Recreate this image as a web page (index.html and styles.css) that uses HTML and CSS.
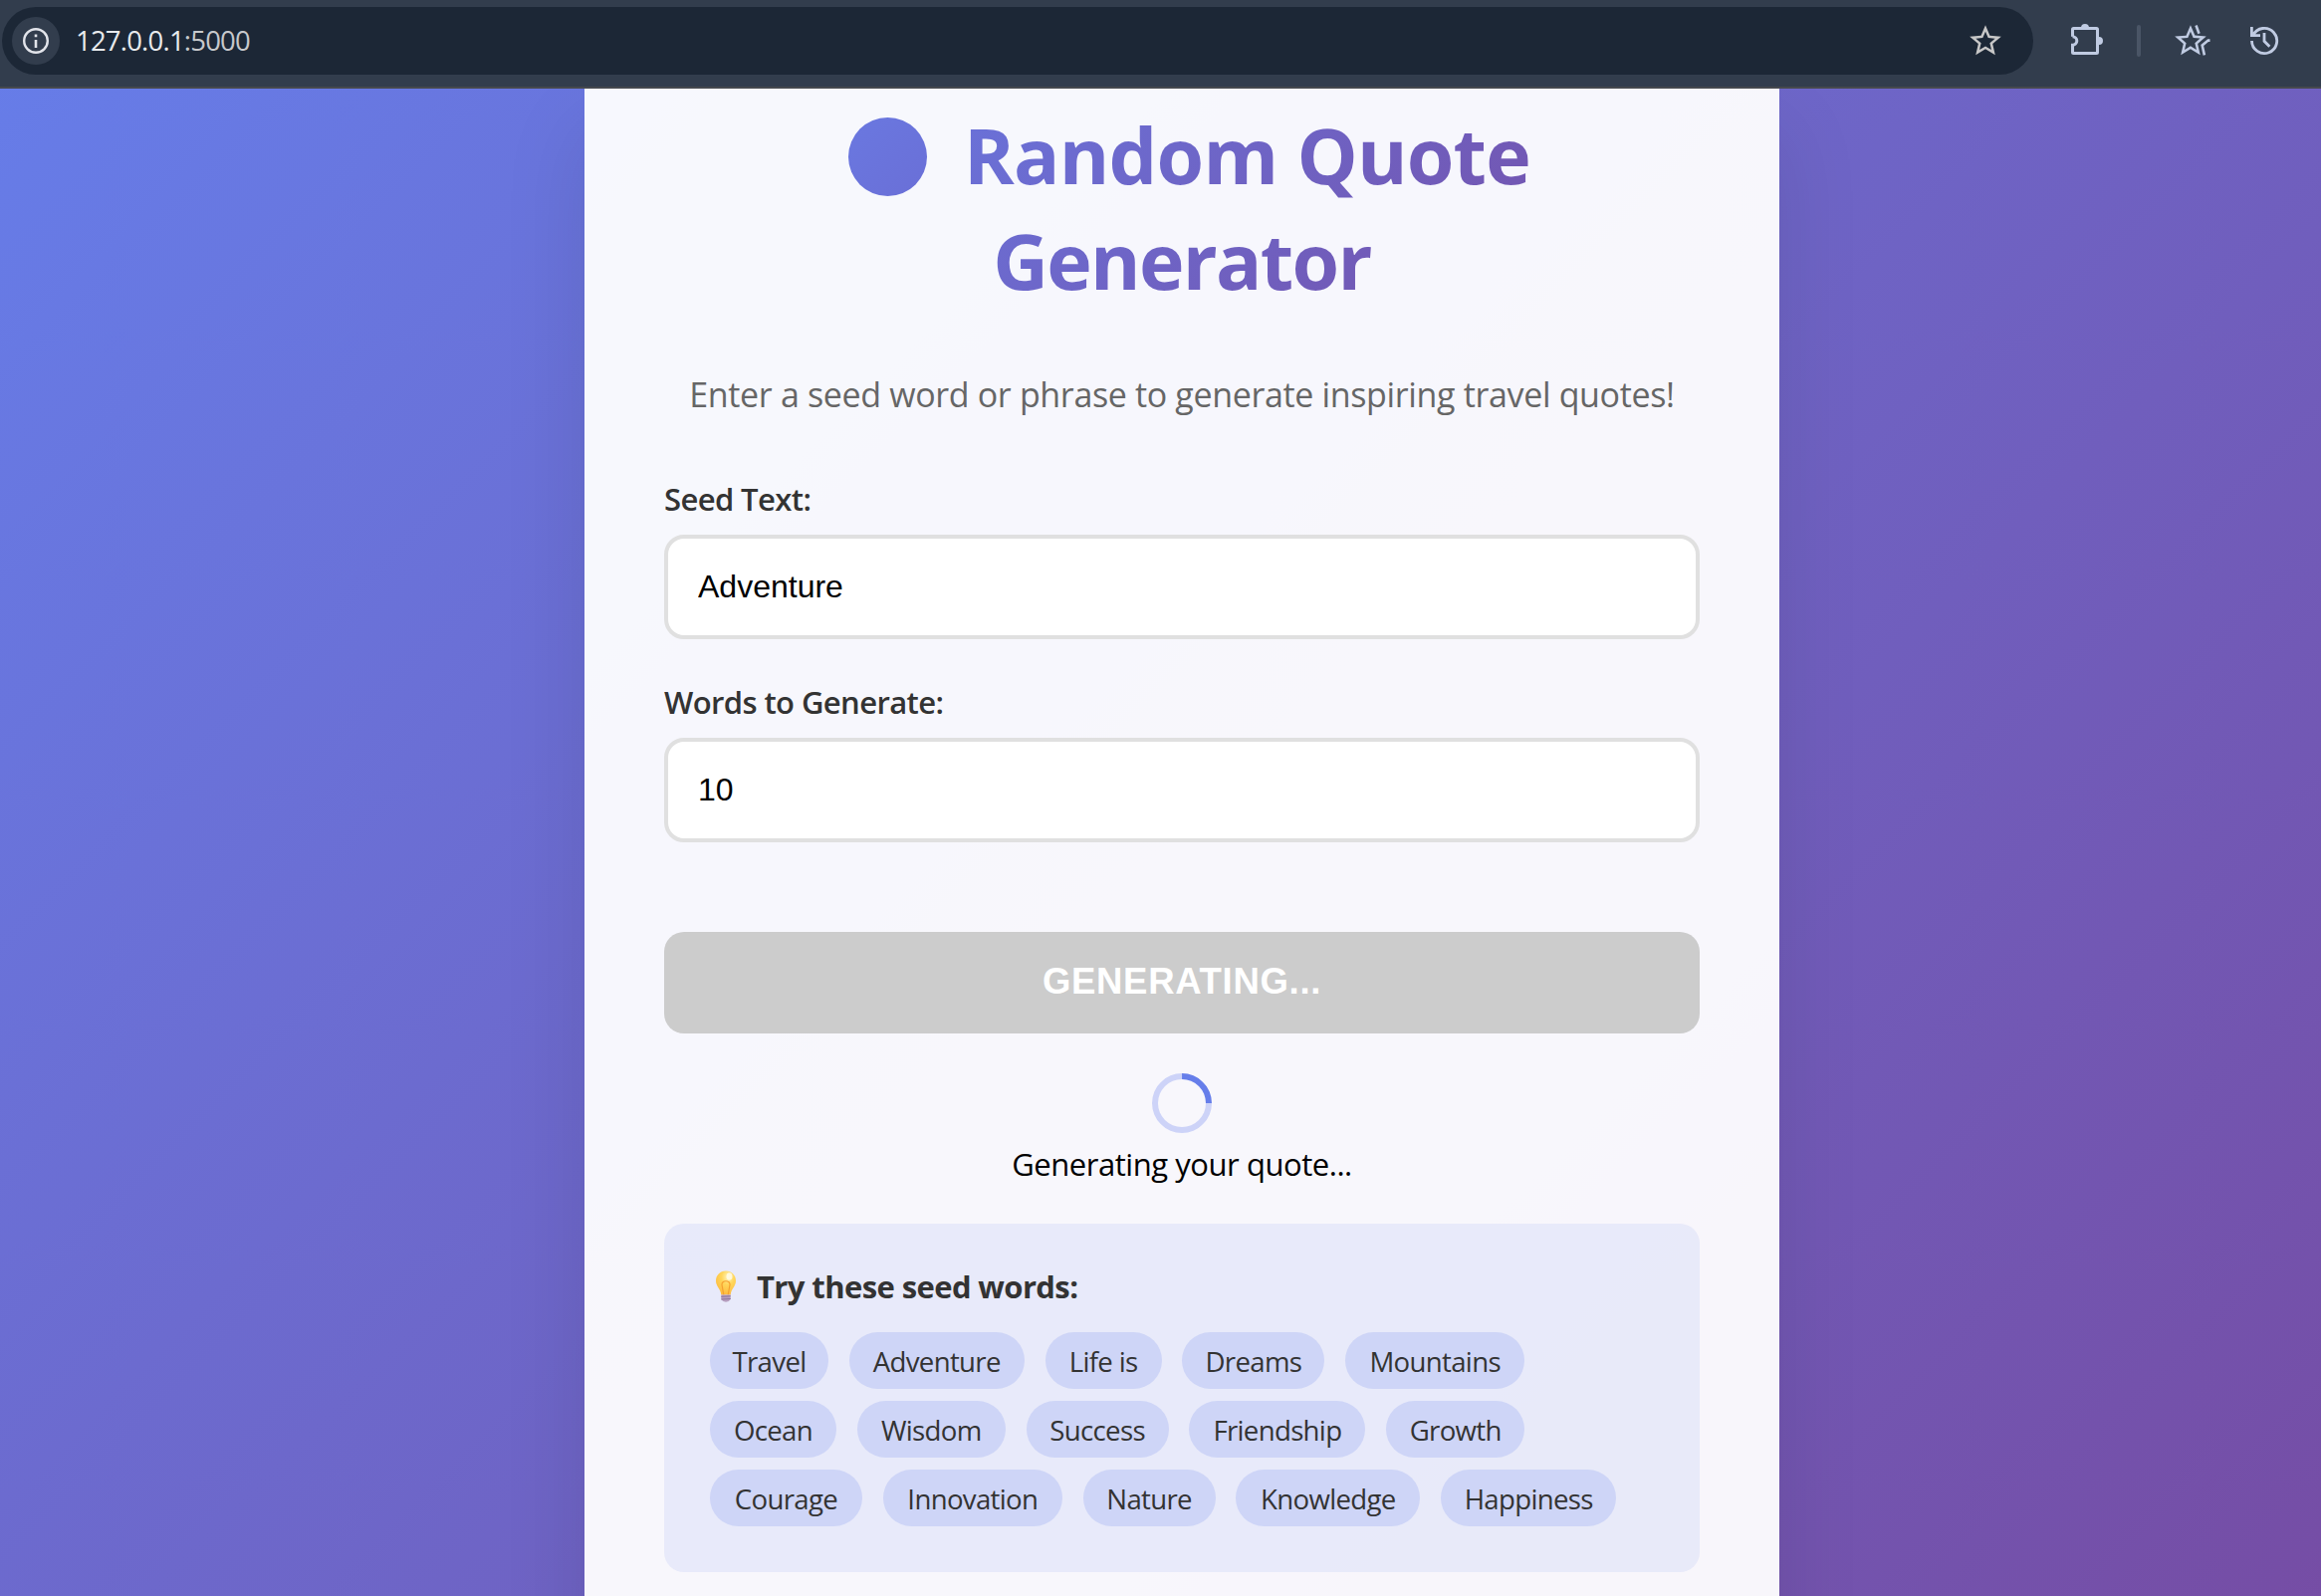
FILE: index.html
```
<!DOCTYPE html>
<html lang="en">
<head>
<meta charset="utf-8">
<title>Random Quote Generator</title>
<link rel="stylesheet" href="styles.css">
</head>
<body>
<header class="toolbar">
  <div class="omnibox">
    <span class="site-info">
      <svg width="26" height="26" viewBox="0 0 26 26" fill="none" stroke="currentColor"><circle cx="13" cy="13" r="11.8" stroke-width="2.4"/><path d="M13 12v8M13 6.6v2.6" stroke-width="2.6"/></svg>
    </span>
    <span class="url">127.0.0.1<span class="port">:5000</span></span>
    <svg class="bookmark" width="38" height="38" viewBox="0 0 24 24" fill="currentColor"><path d="M22 9.24l-7.19-.62L12 2 9.19 8.63 2 9.24l5.46 4.73L5.82 21 12 17.27 18.18 21l-1.63-7.03L22 9.24zM12 15.4l-3.76 2.27 1-4.28-3.32-2.88 4.38-.38L12 6.1l1.71 4.04 4.38.38-3.32 2.88 1 4.28L12 15.4z"/></svg>
  </div>
  <div class="actions">
    <svg width="48" height="48" viewBox="0 0 48 48" fill="none" stroke="currentColor" stroke-width="3"><path d="M7.5 19.7V12.5q0-1 1-1h23q1 0 1 1v23q0 1-1 1h-23q-1 0-1-1v-7.2A4.3 4.3 0 0 0 7.5 19.7"/><path d="M16 11a4 4 0 0 1 8 0zM34 20a4 4 0 0 1 0 8z" fill="currentColor" stroke="none"/></svg>
    <span class="divider"></span>
    <svg width="48" height="48" viewBox="0 0 48 48" fill="none" stroke="currentColor" stroke-width="2.6"><path d="M22 9.24l-7.19-.62L12 2 9.19 8.63 2 9.24l5.46 4.73L5.82 21 12 17.27 18.18 21l-1.63-7.03L22 9.24zM12 15.4l-3.76 2.27 1-4.28-3.32-2.88 4.38-.38L12 6.1l1.71 4.04 4.38.38-3.32 2.88 1 4.28L12 15.4z" transform="translate(5 5) scale(1.58)" fill="currentColor" stroke="none"/><path d="M29.5 8.5l3 8.3M43.5 23.6h-1.8l-6 5 2.2 9.8"/></svg>
    <svg width="48" height="48" viewBox="0 0 48 48" fill="none" stroke="currentColor" stroke-width="2.8"><path d="M11.5 24A12.6 12.6 0 1 0 12.8 18.4M11.4 10v8.6H20M24 16v8.3l5.4 5.4"/></svg>
  </div>
</header>
<main class="page">
  <section class="card">
    <h1 class="title">
      <span class="title-line first"><i class="dot"></i><span>Random Quote</span></span>
      <span class="title-line second">Generator</span>
    </h1>
    <p class="subtitle">Enter a seed word or phrase to generate inspiring travel quotes!</p>
    <form class="form">
      <div class="field"><label for="seed">Seed Text:</label><input id="seed" type="text" value="Adventure"></div>
      <div class="field"><label for="words">Words to Generate:</label><input id="words" type="text" value="10"></div>
      <button class="submit" type="button">GENERATING...</button>
    </form>
    <div class="loading"><div class="spinner"></div><p>Generating your quote...</p></div>
    <div class="examples">
      <h2>
        <svg width="22" height="32" viewBox="0 0 22 32">
          <defs><radialGradient id="glass" cx=".6" cy=".25" r=".8"><stop offset="0" stop-color="#fff3b8"/><stop offset=".4" stop-color="#ffd65a"/><stop offset="1" stop-color="#fdb83c"/></radialGradient></defs>
          <path d="M11 0.5C5 .5 1 5 1 10.5c0 5.5 4.600 7.500 5.300 14h9.400c.7-6.500 5.300-8.500 5.300-14C21 5 17 .5 11 .5z" fill="url(#glass)"/>
          <path d="M8.800 24.500L7 14.500c-.8-5 8.800-5 8 0l-1.800 10" fill="none" stroke="#f5a030" stroke-width="1.200"/>
          <ellipse cx="14.500" cy="6" rx="3" ry="3.800" fill="#fffbe8" opacity=".85"/>
          <path d="M6.300 24.500h9.400v4.500q-1.700 2.800-4.700 2.800t-4.700-2.800z" fill="#b79fc0"/>
          <path d="M6.300 26.300l9.400-.5M6.300 29l9.400-.5" stroke="#8e7599" stroke-width="1"/>
        </svg>
        <span>Try these seed words:</span>
      </h2>
      <div class="chips">
        <div class="chip-row"><span class="chip" style="width:119px">Travel</span><span class="chip" style="width:176px">Adventure</span><span class="chip" style="width:117px">Life is</span><span class="chip" style="width:143px">Dreams</span><span class="chip" style="width:180px">Mountains</span></div>
        <div class="chip-row"><span class="chip" style="width:127px">Ocean</span><span class="chip" style="width:149px">Wisdom</span><span class="chip" style="width:143px">Success</span><span class="chip" style="width:177px">Friendship</span><span class="chip" style="width:139px">Growth</span></div>
        <div class="chip-row"><span class="chip" style="width:153px">Courage</span><span class="chip" style="width:180px">Innovation</span><span class="chip" style="width:133px">Nature</span><span class="chip" style="width:185px">Knowledge</span><span class="chip" style="width:176px">Happiness</span></div>
      </div>
    </div>
  </section>
</main>
</body>
</html>
```
FILE: styles.css
```
* { box-sizing: border-box; margin: 0; padding: 0; }
body {
  height: 1603px;
  overflow: hidden;
  display: flex;
  flex-direction: column;
  font-family: "Segoe UI", "Open Sans", "Noto Sans", sans-serif;
}
svg { display: block; flex: none; }

.toolbar {
  height: 89px;
  flex: none;
  display: flex;
  padding: 7px 33px 0 2px;
  background: #323d4d;
  border-bottom: 2px solid #46494e;
  color: #c0cbe2;
}
.omnibox {
  width: 2040px;
  height: 68px;
  border-radius: 34px;
  background: #1c2736;
  display: flex;
  align-items: center;
  padding: 0 29px 0 10px;
}
.site-info {
  width: 48px;
  height: 48px;
  border-radius: 50%;
  background: #323d4d;
  color: #e2e4ea;
  display: flex;
  align-items: center;
  justify-content: center;
}
.url {
  flex: 1;
  margin-left: 16px;
  font-size: 27.5px;
  line-height: 66px;
  letter-spacing: -0.8px;
  color: #e8eaed;
}
.port { color: #c7c9cc; }
.bookmark { color: #c7c7c7; }
.actions {
  height: 68px;
  display: flex;
  align-items: center;
  margin-left: 32px;
}
.divider {
  width: 4px;
  height: 32px;
  margin: 0 26px 0 24px;
  border-radius: 2px;
  background: #4a5566;
}
.divider + svg { margin-right: 26px; }

.page {
  flex: 1;
  width: 2374px;
  display: flex;
  justify-content: center;
  overflow: hidden;
  background: linear-gradient(135deg, #667eea, #764ba2) 0 -130px / 100% 1774px no-repeat;
}
.card {
  width: 1200px;
  height: 1700px;
  flex: none;
  padding: 14px 80px 0;
  background: rgba(255, 255, 255, 0.95);
  box-shadow: 0 40px 80px rgba(0, 0, 0, 0.1);
}

.title {
  font-size: 77px;
  line-height: 106px;
  font-weight: 700;
  background: linear-gradient(135deg, #667eea, #764ba2);
  -webkit-background-clip: text;
  background-clip: text;
  color: transparent;
}
.title-line { display: flex; justify-content: center; align-items: center; }
.first { letter-spacing: -0.8px; padding-left: 15px; }
.second { letter-spacing: -1.7px; }
.dot {
  width: 79px;
  height: 79px;
  margin: 2px 37px 0 0;
  border-radius: 50%;
  background: linear-gradient(135deg, #6a78e0, #6a6fd7);
}
.subtitle {
  margin-top: 58px;
  text-align: center;
  font-size: 34px;
  line-height: 47px;
  letter-spacing: -0.35px;
  color: #666;
}

.form { margin-top: 60px; }
.field { margin-bottom: 42px; }
.field label {
  display: block;
  margin-bottom: 15px;
  font-size: 31px;
  line-height: 42px;
  font-weight: 600;
  letter-spacing: -0.6px;
  color: #333;
}
.field input {
  display: block;
  width: 100%;
  height: 105px;
  padding: 0 30px;
  border: 4px solid #e0e0e0;
  border-radius: 20px;
  background: #fff;
  font: 32px "Liberation Sans", Arial, sans-serif;
  color: #000;
}
.submit {
  display: block;
  width: 100%;
  height: 102px;
  margin-top: 90px;
  padding-bottom: 2px;
  border: 0;
  border-radius: 20px;
  background: #ccc;
  color: #fff;
  font: bold 36.5px "Liberation Sans", Arial, sans-serif;
  letter-spacing: 0.7px;
}

.loading { margin-top: 40px; text-align: center; }
.spinner {
  width: 60px;
  height: 60px;
  margin: 0 auto 10px;
  border: 6px solid #cdd3f8;
  border-top-color: #667eea;
  border-radius: 50%;
  transform: rotate(45deg);
}
.loading p { font-size: 31px; line-height: 42px; letter-spacing: -0.45px; color: #000; }

.examples {
  height: 350px;
  margin-top: 39px;
  padding: 42px 46px 0;
  border-radius: 20px;
  background: rgba(102, 126, 234, 0.1);
  color: #333;
}
.examples h2 {
  display: flex;
  align-items: center;
  gap: 20px;
  padding-left: 5px;
  font-size: 31px;
  line-height: 42px;
  letter-spacing: -0.6px;
}
.chips { display: flex; flex-direction: column; gap: 12px; margin-top: 25px; }
.chip-row { display: flex; gap: 20.8px; }
.chip {
  flex: none;
  height: 57px;
  padding-top: 1px;
  display: flex;
  justify-content: center;
  border-radius: 30px;
  background: #ced5f7;
  font-size: 27.6px;
  line-height: 56px;
  letter-spacing: -0.67px;
  white-space: nowrap;
}
```
